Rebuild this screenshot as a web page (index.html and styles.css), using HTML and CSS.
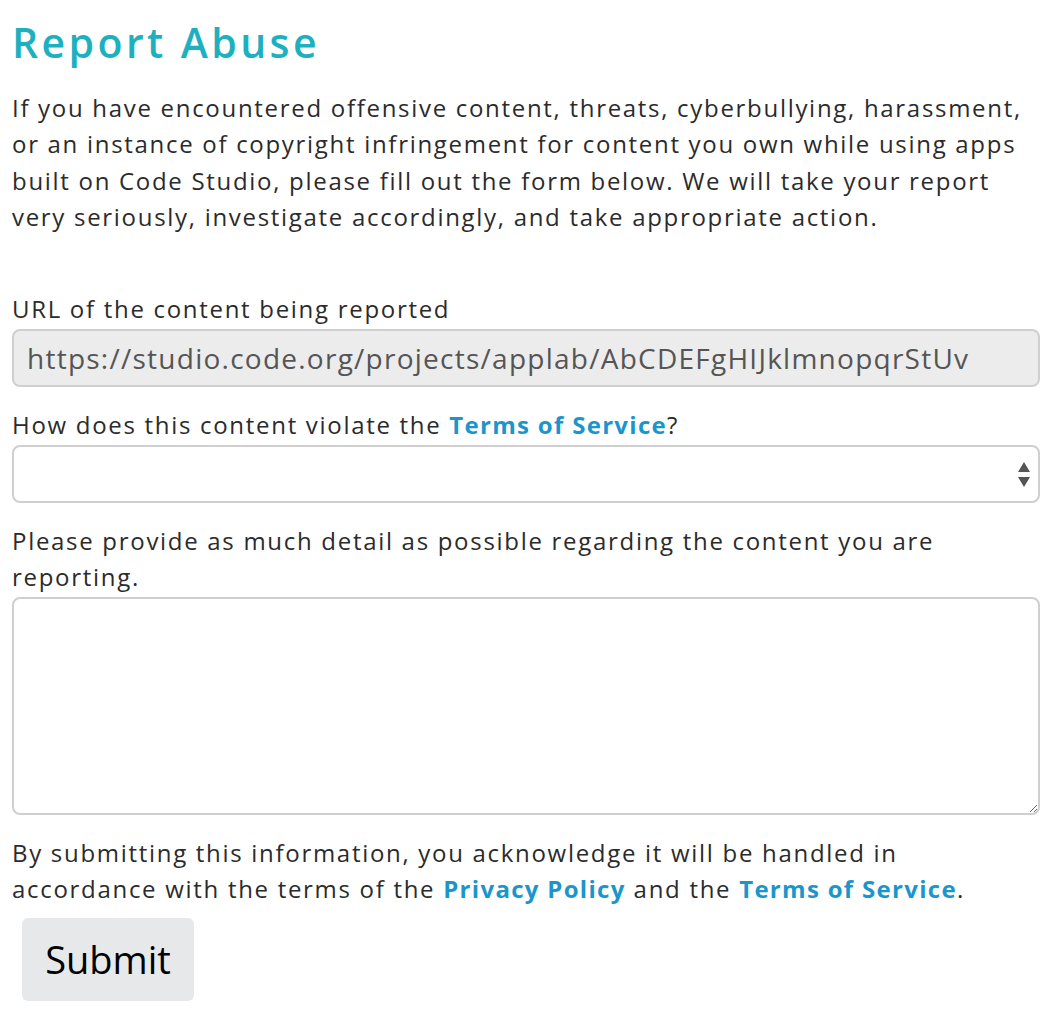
FILE: index.html
```html
<!DOCTYPE html>
<html lang="en">
<head>
<meta charset="utf-8">
<title>Report Abuse</title>
<link rel="stylesheet" href="styles.css">
</head>
<body>
<main class="page">
  <h1 class="title">Report Abuse</h1>
  <p class="intro">If you have encountered offensive content, threats, cyberbullying, harassment, or an instance of copyright infringement for content you own while using apps built on Code Studio, please fill out the form below. We will take your report very seriously, investigate accordingly, and take appropriate action.</p>
  <form class="form">
    <label class="label" for="url">URL of the content being reported</label>
    <input class="field field-disabled" id="url" type="text" value="https://studio.code.org/projects/applab/AbCDEFgHIJklmnopqrStUv" disabled>
    <label class="label" for="abuse">How does this content violate the <a class="link" href="#">Terms of Service</a>?</label>
    <div class="select-wrap">
      <select class="field select" id="abuse">
        <option></option>
      </select>
    </div>
    <label class="label" for="detail">Please provide as much detail as possible regarding the content you are reporting.</label>
    <textarea class="field textarea" id="detail"></textarea>
    <p class="notice">By submitting this information, you acknowledge it will be handled in accordance with the terms of the <a class="link" href="#">Privacy Policy</a> and the <a class="link" href="#">Terms of Service</a>.</p>
    <button class="submit" type="button">Submit</button>
  </form>
</main>
</body>
</html>
```
FILE: styles.css
```css
html, body {
  margin: 0;
  padding: 0;
  background: #fff;
}
body {
  font-family: "Open Sans", "Noto Sans", sans-serif;
  color: #2b2b2b;
}
.page {
  width: 1028px;
  padding: 0 12px;
}
.title {
  margin: 0 0 24px;
  padding-top: 18px;
  font-size: 41px;
  line-height: 48px;
  font-weight: 600;
  letter-spacing: 3.4px;
  color: #1db1c0;
}
.intro {
  margin: 0 0 55px;
  font-size: 24px;
  line-height: 36.4px;
  letter-spacing: 1.7px;
}
.form {
  display: flex;
  flex-direction: column;
  align-items: flex-start;
}
.label {
  display: block;
  font-size: 24px;
  line-height: 36px;
  letter-spacing: 1.7px;
  margin-bottom: 2px;
}
.link {
  color: #1a96cc;
  font-weight: 700;
  letter-spacing: 1.3px;
  text-decoration: none;
}
.field {
  box-sizing: border-box;
  width: 1028px;
  border: 2px solid #cfcfcf;
  border-radius: 8px;
  background: #fff;
  font-family: inherit;
  font-size: 24px;
  color: #555;
  margin: 0 0 20px;
}
.field-disabled {
  height: 58px;
  padding: 0 13px;
  background: #ececec;
  font-size: 28px;
  letter-spacing: 1.25px;
}
.select-wrap {
  position: relative;
  width: 1028px;
}
.select-wrap::before,
.select-wrap::after {
  content: "";
  position: absolute;
  right: 10px;
  width: 0;
  height: 0;
  border-left: 6px solid transparent;
  border-right: 6px solid transparent;
  pointer-events: none;
}
.select-wrap::before {
  top: 17px;
  border-bottom: 10px solid #555;
}
.select-wrap::after {
  top: 32px;
  border-top: 10px solid #555;
}
.select {
  display: block;
  height: 58px;
  -webkit-appearance: none;
  appearance: none;
  padding: 0 14px;
}
.textarea {
  display: block;
  height: 218px;
  resize: vertical;
  padding: 10px 14px;
}
.notice {
  margin: 0 0 11px;
  font-size: 24px;
  line-height: 36px;
  letter-spacing: 1.7px;
}
.submit {
  margin-left: 10px;
  width: 172px;
  height: 83px;
  border: none;
  border-radius: 6px;
  background: #e7e8ea;
  color: #000;
  font-family: inherit;
  font-size: 38px;
  cursor: pointer;
}
```
